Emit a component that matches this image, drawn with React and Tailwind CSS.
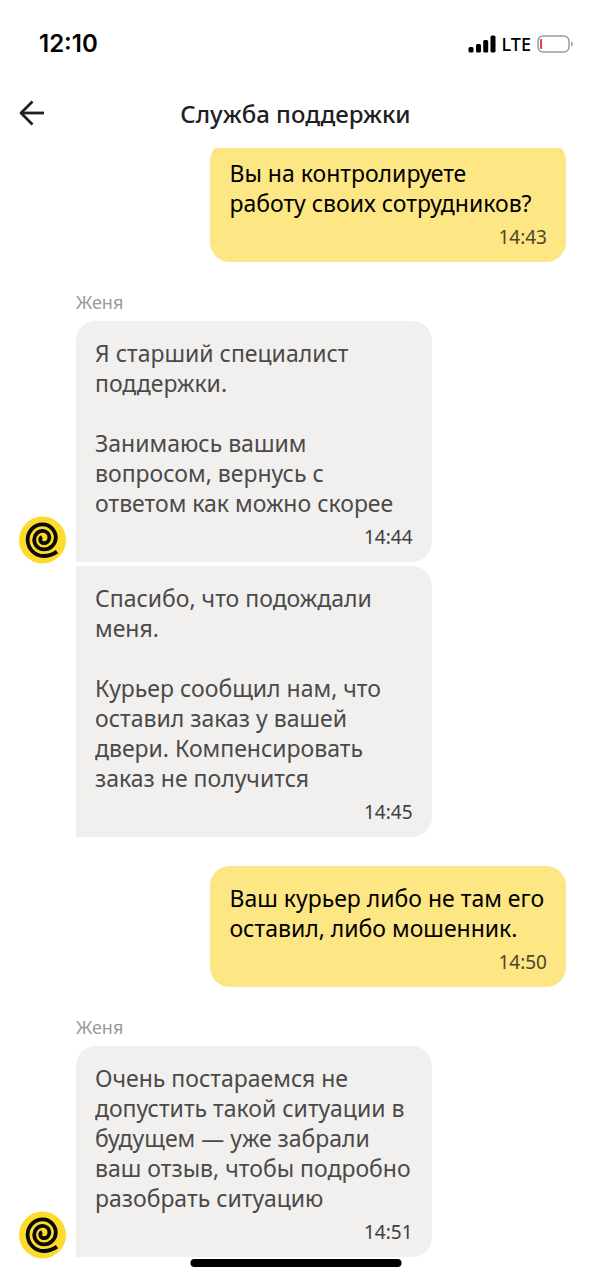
import React from 'react';

const groups = [
  {
    id: 1,
    own: true,
    messages: [
      { id: 1, text: 'Вы на контролируете\nработу своих сотрудников?', time: '14:43' },
    ],
  },
  {
    id: 2,
    author: 'Женя',
    messages: [
      {
        id: 2,
        text: 'Я старший специалист\nподдержки.\n\nЗанимаюсь вашим\nвопросом, вернусь с\nответом как можно скорее',
        time: '14:44',
      },
      {
        id: 3,
        text: 'Спасибо, что подождали\nменя.\n\nКурьер сообщил нам, что\nоставил заказ у вашей\nдвери. Компенсировать\nзаказ не получится',
        time: '14:45',
      },
    ],
  },
  {
    id: 3,
    own: true,
    messages: [
      { id: 4, text: 'Ваш курьер либо не там его\nоставил, либо мошенник.', time: '14:50' },
    ],
  },
  {
    id: 4,
    author: 'Женя',
    messages: [
      {
        id: 5,
        text: 'Очень постараемся не\nдопустить такой ситуации в\nбудущем — уже забрали\nваш отзыв, чтобы подробно\nразобрать ситуацию',
        time: '14:51',
      },
    ],
  },
];

const Avatar = () => (
  <svg viewBox="0 0 48 48" className="w-12 h-12 -ml-px -mb-0.5" aria-hidden="true">
    <circle cx="24.5" cy="24" r="23.5" fill="#fcdb2d" />
    <path
      d="M39 35.6 Q33 40 25.5 40 A15.9 16.6 0 0 1 9.6 23.8 A15 15.4 0 0 1 24.6 8.4 A13.2 13.4 0 0 1 37.8 21.8 A12 11.8 0 0 1 25.6 33.4 A9.4 9.8 0 0 1 16.2 23.6 A8.6 8.8 0 0 1 24.8 14.8 A6.6 6.8 0 0 1 31.4 21.6 A5.6 5.6 0 0 1 25.8 27.2 A3.6 3.6 0 0 1 22.2 23.6 Q22.2 21.8 24 21"
      fill="none" stroke="#0b0a04" strokeWidth="3.8"
    />
  </svg>
);

const StatusBar = () => (
  <div className="flex items-center justify-between pl-[39px] pr-[17px] pt-[28px] text-black">
    <span className="pt-px font-[Inter] text-[24px] leading-[30px] font-semibold">12:10</span>
    <div className="flex items-center">
      <svg viewBox="0 0 28 18" className="w-7 h-[18px]" aria-label="Signal">
        <rect x="0.5" y="12" width="5" height="5.5" rx="1.5" />
        <rect x="8" y="9" width="5" height="8.5" rx="1.5" />
        <rect x="15.2" y="5" width="5" height="12.5" rx="1.5" />
        <rect x="22.5" y="0.5" width="5" height="17" rx="1.5" />
      </svg>
      <span className="ml-1.5 text-[18px] leading-[30px] font-medium">LTE</span>
      <svg viewBox="0 0 37 18" className="ml-1.5 w-[37px] h-[18px]" aria-label="Battery">
        <rect x="1" y="1" width="31" height="16" rx="5" fill="none" stroke="#9b9b9d" strokeWidth="1.5" />
        <rect x="3" y="4" width="2" height="10" rx="0.8" fill="#e8384f" />
        <path d="M34 6.5 C36.4 7.4 36.4 10.6 34 11.5 Z" fill="#9b9b9d" />
      </svg>
    </div>
  </div>
);

const Header = () => (
  <header className="bg-white">
    <StatusBar />
    <div className="grid grid-cols-[40px_1fr_40px] items-center px-[19px] h-[89px] pt-[18px]">
      <button type="button" aria-label="Назад" className="cursor-pointer">
        <svg
          viewBox="0 0 26 26" className="w-[26px] h-[26px]"
          fill="none" stroke="#21201f" strokeWidth="2.8" strokeLinejoin="round"
        >
          <path d="M25 13 H2" />
          <path d="M13.5 1.5 L2 13 L13.5 24.5" />
        </svg>
      </button>
      <h1 className="pt-0.5 text-center text-[24px] leading-[30px] font-medium text-[#21201f]">Служба поддержки</h1>
    </div>
  </header>
);

const Message = ({ text, time, own, corners }) => (
  <div className={`w-[65%] px-[19px] pt-[17px] pb-[11px] ${corners} ${own ? 'bg-[#fde684] text-black' : 'bg-[#f1f0ef] text-[#4b4a49]'}`}>
    <p className="whitespace-pre-line text-[23px] leading-[30px]">{text}</p>
    <time className={`block mt-[5px] text-right text-[19px] leading-[28px] ${own ? 'text-[#4d4628]' : 'text-[#403f3e]'}`}>{time}</time>
  </div>
);

export default function App() {
  return (
    <div className="min-h-screen bg-white font-['Noto_Sans',sans-serif]">
      <Header />

      <main className="overflow-hidden pl-[19px] pr-[25px] pb-[22px]">
        <div className="-mt-[7px] flex flex-col gap-[29px]">
          {groups.map((group) => (
            <section key={group.id}>
              {group.author && (
                <p className="ml-[57px] mb-2 text-[18px] leading-[22px] text-[#9b9a99]">{group.author}</p>
              )}
              <div className="flex flex-col gap-1">
                {group.messages.map((message, index) => (
                  <div key={message.id} className={`flex items-end ${group.own ? 'justify-end' : ''}`}>
                    {!group.own && (
                      <div className="w-[57px] shrink-0">{index === 0 && <Avatar />}</div>
                    )}
                    <Message
                      {...message}
                      own={group.own}
                      corners={group.own ? 'rounded-[20px]' : index === 0 ? 'rounded-[20px] rounded-bl-none' : 'rounded-r-[20px]'}
                    />
                  </div>
                ))}
              </div>
            </section>
          ))}
        </div>
      </main>

      {/* Home indicator */}
      <div className="fixed bottom-[13px] left-1/2 -translate-x-1/2 w-[211px] h-2 rounded-full bg-black" />
    </div>
  );
}
